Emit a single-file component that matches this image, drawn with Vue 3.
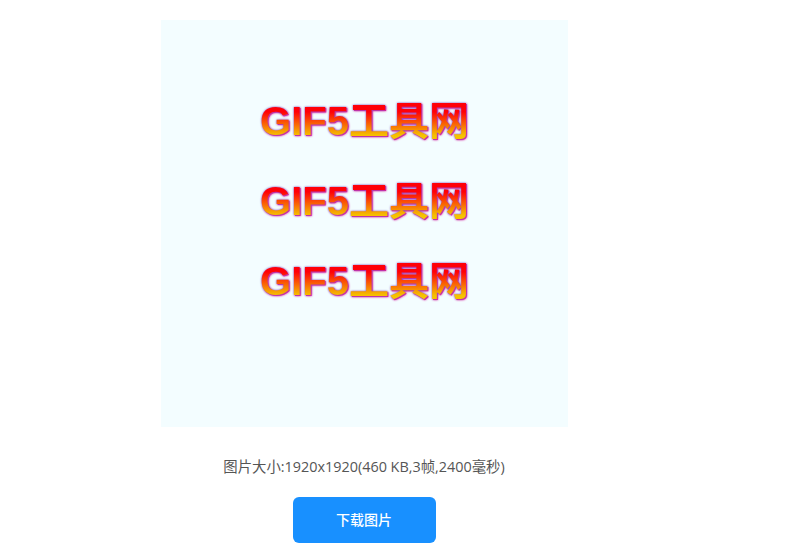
<script setup>
const lines = ['GIF5工具网', 'GIF5工具网', 'GIF5工具网']
</script>

<template>
  <div class="page">
    <div class="preview">
      <div v-for="(line, index) in lines" :key="index" class="logo-text">{{ line }}</div>
    </div>
    <p class="info">图片大小:1920x1920(460 KB,3帧,2400毫秒)</p>
    <button class="download">下载图片</button>
  </div>
</template>

<style>
html,
body {
  background: #fff;
  overflow: hidden;
}
</style>

<style scoped>
.page {
  width: 728px;
  height: 552px;
  padding-top: 20px;
  box-sizing: border-box;
  display: flex;
  flex-direction: column;
  align-items: center;
  font-family: "Open Sans", "Noto Sans CJK SC", sans-serif;
}

.preview {
  width: 407px;
  height: 407px;
  margin-left: 1px;
  background: #f3fdff;
  display: flex;
  flex-direction: column;
  align-items: center;
  gap: 34px;
  padding-top: 78px;
  box-sizing: border-box;
}

.logo-text {
  font-family: "Liberation Sans", "Noto Sans CJK SC", sans-serif;
  font-weight: 700;
  font-size: 40px;
  line-height: 46px;
  background: linear-gradient(180deg, #ff0008 30%, #f5c400 82%);
  -webkit-background-clip: text;
  background-clip: text;
  color: transparent;
  filter: drop-shadow(0 0 1px #7c5cc4) drop-shadow(1px 1px 0.6px #e0209c);
}

.info {
  margin: 30px 0 0;
  font-size: 14.4px;
  line-height: 20px;
  color: #555;
  font-weight: 400;
}

.download {
  margin-top: 20px;
  width: 143px;
  height: 46px;
  padding: 0 0 2px;
  border: none;
  border-radius: 6px;
  background: #1890ff;
  color: #fff;
  font-family: inherit;
  font-size: 14px;
  font-weight: 500;
}
</style>
